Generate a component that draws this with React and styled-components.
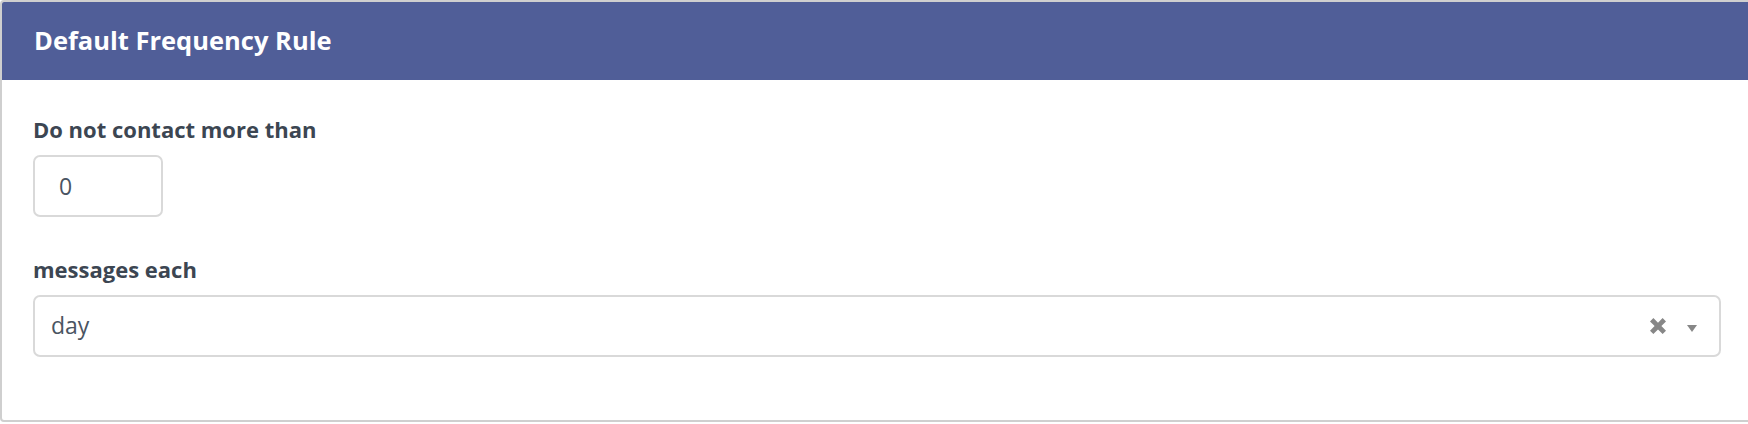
import React from "react";
import styled, { createGlobalStyle } from "styled-components";

const Global = createGlobalStyle`
  html, body { margin: 0; padding: 0; background: #ffffff; overflow: hidden; }
  body { font-family: "Open Sans", "Noto Sans", sans-serif; }
`;

const Card = styled.section`
  box-sizing: border-box;
  width: 1754px;
  height: 422px;
  border: 2px solid #cfcfcf;
  border-radius: 4px;
  background: #fff;
  overflow: hidden;
  display: flex;
  flex-direction: column;
`;

const Header = styled.header`
  height: 78px;
  flex: none;
  background: #505e98;
  display: flex;
  align-items: center;
  padding-left: 32px;
  padding-bottom: 2px;
  box-sizing: border-box;
`;

const Title = styled.h2`
  margin: 0;
  color: #ffffff;
  font-size: 25.5px;
  font-weight: 700;
  letter-spacing: 0;
`;

const Body = styled.div`
  display: flex;
  flex-direction: column;
  padding: 34px 31px 0 31px;
`;

const Label = styled.label`
  display: block;
  color: #3c4652;
  font-size: 22px;
  font-weight: 700;
  line-height: 30px;
  margin-bottom: ${(p) => p.$mb || 0}px;
  margin-top: ${(p) => p.$mt || 0}px;
`;

const NumberBox = styled.div`
  box-sizing: border-box;
  width: 130px;
  height: 62px;
  border: 2px solid #d9d9d9;
  border-radius: 7px;
  display: flex;
  align-items: center;
  padding-left: 24px;
  color: #4a5462;
  font-size: 23px;
`;

const Select = styled.div`
  box-sizing: border-box;
  width: 1688px;
  height: 62px;
  border: 2px solid #d9d9d9;
  border-radius: 7px;
  display: flex;
  align-items: center;
  padding: 0 22px 0 16px;
  color: #4a5462;
  font-size: 23px;
`;

const Value = styled.span`
  flex: 1;
  padding-bottom: 2px;
`;

const Indicators = styled.div`
  display: flex;
  align-items: center;
  gap: 19px;
`;

const Icon = styled.svg`
  display: block;
  fill: #878787;
`;

export default function App() {
  return (
    <>
      <Global />
      <Card>
        <Header>
          <Title>Default Frequency Rule</Title>
        </Header>
        <Body>
          <Label $mb={11}>Do not contact more than</Label>
          <NumberBox>0</NumberBox>
          <Label $mt={37} $mb={11}>messages each</Label>
          <Select>
            <Value>day</Value>
            <Indicators>
              <Icon width="20" height="20" viewBox="0 0 16 16">
                <path d="M1.6 4.3 4.3 1.6 8 5.3 11.7 1.6 14.4 4.3 10.7 8 14.4 11.7 11.7 14.4 8 10.7 4.3 14.4 1.6 11.7 5.3 8Z" />
              </Icon>
              <Icon width="10" height="8" viewBox="0 0 10 8" style={{ marginTop: 6 }}>
                <path d="M0 0H10L5 7Z" />
              </Icon>
            </Indicators>
          </Select>
        </Body>
      </Card>
    </>
  );
}
